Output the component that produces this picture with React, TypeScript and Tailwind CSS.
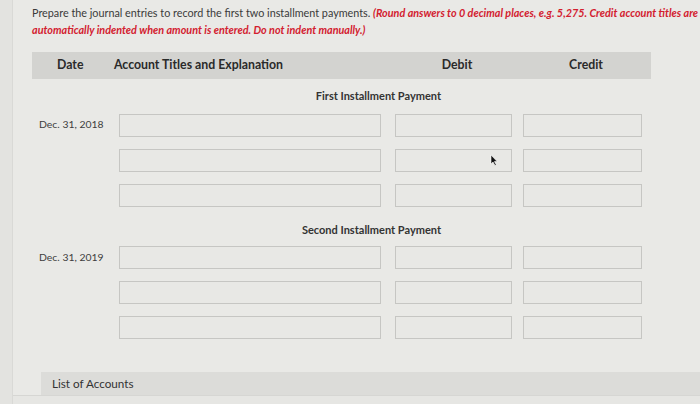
import React from "react";

type Row = { date?: string };

const firstRows: Row[] = [{ date: "Dec. 31, 2018" }, {}, {}];
const secondRows: Row[] = [{ date: "Dec. 31, 2019" }, {}, {}];

function EntryRow({ date }: Row) {
  return (
    <div className="flex items-center h-[23px]">
      <div className="w-[87px] pl-[7px] text-[10.4px] text-[#3d3d3d]">{date}</div>
      <div className="w-[262px] h-full border border-[#c6c6c3] bg-[#e8e8e5]" />
      <div className="w-[117px] h-full ml-[14px] border border-[#c6c6c3] bg-[#e8e8e5]" />
      <div className="w-[119px] h-full ml-[11px] border border-[#c6c6c3] bg-[#e8e8e5]" />
    </div>
  );
}

function SectionTitle({ children }: { children: React.ReactNode }) {
  return (
    <div className="w-[409px] text-right text-[11px] font-bold text-[#333]">
      {children}
    </div>
  );
}

export default function App() {
  return (
    <div
      className="relative w-[700px] h-[404px] overflow-hidden bg-[#e9e9e6] flex"
      style={{ fontFamily: "Lato, 'Open Sans', sans-serif" }}
    >
      {/* left edge strip */}
      <div className="w-[13px] shrink-0 bg-[#e3e3e0] border-r border-[#d9d9d6]" />

      <div className="flex-1 flex flex-col">
        {/* instructions */}
        <div className="pl-[19px] pt-[4px] leading-[17px] text-[10.8px] text-[#3a3a3a] whitespace-nowrap">
          <div>
            Prepare the journal entries to record the first two installment payments.{" "}
            <span className="italic font-bold text-[#d3202f]">
              (Round answers to 0 decimal places, e.g. 5,275. Credit account titles are
            </span>
          </div>
          <div className="italic font-bold text-[#d3202f]">
            automatically indented when amount is entered. Do not indent manually.)
          </div>
        </div>

        {/* journal table */}
        <div className="ml-[19px] mt-[14px] w-[619px]">
          <div className="flex items-center h-[27px] bg-[#d3d3d0] text-[12.3px] font-bold text-[#2a2a2a]">
            <div className="w-[25px]" />
            <div className="w-[57px]">Date</div>
            <div className="w-[284px]">Account Titles and Explanation</div>
            <div className="w-[118px] text-center">Debit</div>
            <div className="w-[11px]" />
            <div className="w-[118px] text-center">Credit</div>
          </div>

          <div className="mt-[9px]">
            <SectionTitle>First Installment Payment</SectionTitle>
          </div>
          <div className="mt-[9px] flex flex-col gap-[12px]">
            {firstRows.map((r, i) => (
              <EntryRow key={i} date={r.date} />
            ))}
          </div>

          <div className="mt-[15px]">
            <SectionTitle>Second Installment Payment</SectionTitle>
          </div>
          <div className="mt-[8px] flex flex-col gap-[12px]">
            {secondRows.map((r, i) => (
              <EntryRow key={i} date={r.date} />
            ))}
          </div>
        </div>

        {/* list of accounts */}
        <div className="ml-[28px] mt-[33px] h-[23px] flex items-center pl-[11px] bg-[#dcdcd9] text-[11.7px] text-[#333]">
          List of Accounts
        </div>
        <div className="flex-1 bg-[#e6e6e3] border-t border-[#d6d6d3]" />
      </div>

      {/* mouse pointer */}
      <svg className="absolute left-[490px] top-[155px]" width="8" height="11" viewBox="0 0 8 11">
        <path d="M1 0 L1 9 L3 7 L5 10.5 L6.3 9.8 L4.4 6.6 L7.2 6.6 Z" fill="#111" stroke="#fff" strokeWidth="0.6" />
      </svg>
    </div>
  );
}
